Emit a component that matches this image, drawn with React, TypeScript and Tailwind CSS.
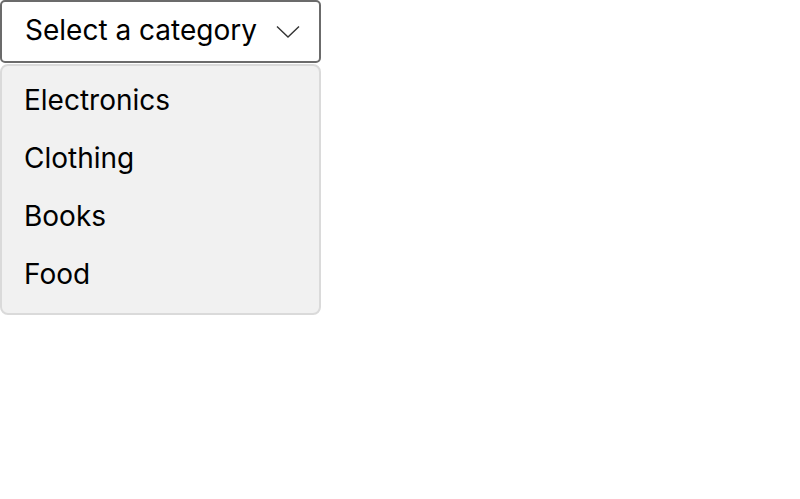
import React from "react";

export default function App() {
  const items = ["Electronics", "Clothing", "Books", "Food"];
  return (
    <div className="w-[800px] h-[499px] bg-white" style={{ fontFamily: "Inter, sans-serif" }}>
      <div className="w-[321px]">
        <button className="w-[321px] h-[63px] flex items-center justify-between pl-[23px] pr-[19px] pb-[3px] border-2 border-[#6b6b6b] rounded-[5px] bg-white text-black text-[28px] leading-none">
          <span>Select a category</span>
          <svg width="24" height="14" viewBox="0 0 24 14" fill="none" className="mt-[3px]">
            <path d="M1 1.5 L12 12 L23 1.5" stroke="#333" strokeWidth="1.4" />
          </svg>
        </button>
        <div className="mt-[1px] w-[321px] h-[251px] bg-[#f1f1f1] border-2 border-[#dadada] rounded-[8px] pt-[5px]">
          {items.map((it) => (
            <div key={it} className="h-[58px] flex items-center pl-[22px] text-[28px] leading-none text-black">
              {it}
            </div>
          ))}
        </div>
      </div>
    </div>
  );
}
